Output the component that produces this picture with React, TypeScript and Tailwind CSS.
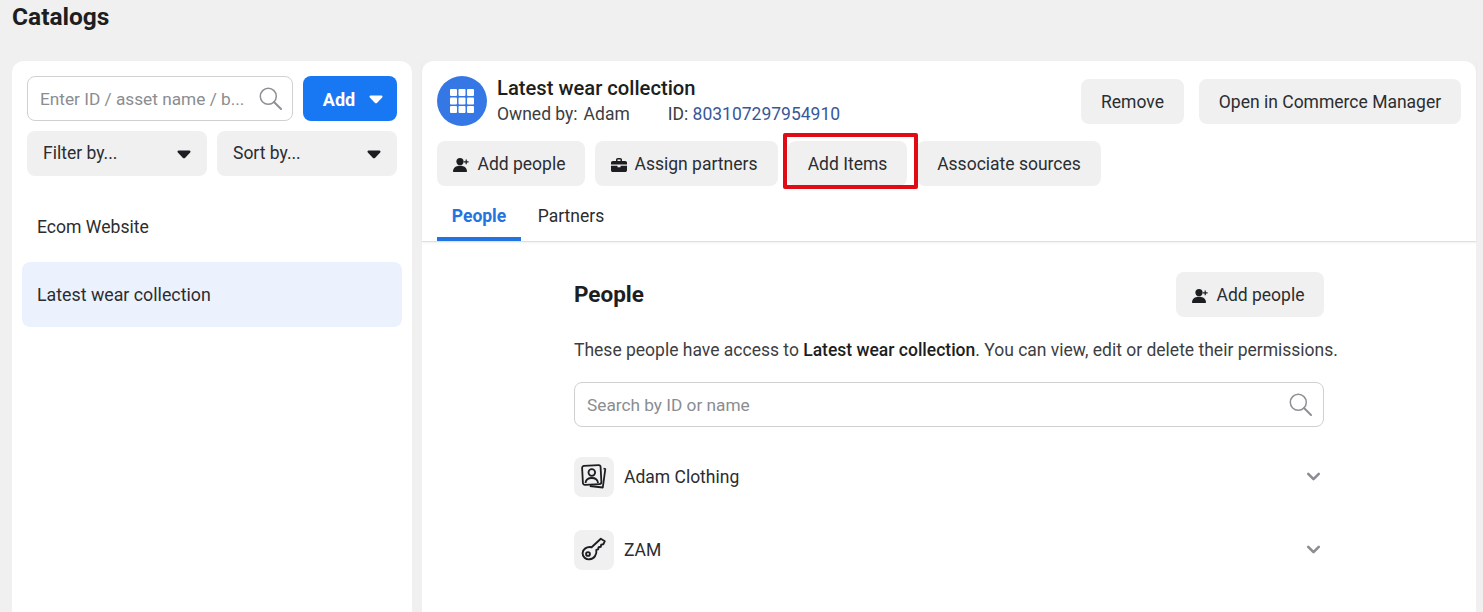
import { ChevronDown } from "lucide-react";

function Caret({ color = "#1c1e21" }: { color?: string }) {
  return (
    <svg width="14" height="9" viewBox="0 0 14 9" fill={color}>
      <path d="M1.6 0.6h10.8c1 0 1.5 1.1 .8 1.9L8 7.9c-.6.6-1.5.6-2 0L.8 2.500C.1 1.700.6.6 1.600.6z" />
    </svg>
  );
}

function SearchGlass() {
  return (
    <svg width="23" height="23" viewBox="0 0 23 23" fill="none" stroke="#8d9094" strokeWidth="1.500" strokeLinecap="round">
      <circle cx="9.300" cy="9.300" r="8" />
      <path d="M15 15l7 7" strokeWidth="2" />
    </svg>
  );
}

function PersonPlus() {
  return (
    <svg width="16" height="16" viewBox="0 0 16 16" fill="#1c1e21">
      <circle cx="7" cy="4.600" r="3.600" />
      <path d="M.6 15c-.4 0-.6-.3-.6-.7C.2 11 2.600 8.800 7 8.800s6.800 2.200 7 5.500c0 .4-.2.7-.6.7H.6z" />
      <path d="M12.600 2.400h1.200v1.800h1.800v1.200h-1.800v1.800h-1.200V5.400h-1.800V4.200h1.800z" />
    </svg>
  );
}

function Briefcase() {
  return (
    <svg width="16" height="14" viewBox="0 0 16 14" fill="#1c1e21">
      <path d="M5 3V1.800C5 .8 5.800 0 6.800 0h2.400C10.200 0 11 .8 11 1.800V3h3.200c1 0 1.800.8 1.800 1.800V6.600H0V4.800C0 3.800.8 3 1.800 3H5zm1.500 0h3V1.500h-3V3z" />
      <path d="M0 7.800h6.500v1.400h3V7.800H16v4.400c0 1-.8 1.800-1.800 1.800H1.800C.8 14 0 13.200 0 12.200V7.800z" />
    </svg>
  );
}

function GridIcon() {
  return (
    <svg width="24" height="24" viewBox="0 0 24 24" fill="#fff">
      {[0, 8.500, 17].map((y) =>
        [0, 8.500, 17].map((x) => <rect key={`${x}-${y}`} x={x} y={y} width="7" height="7" rx="1" />),
      )}
    </svg>
  );
}

function PhotoPerson() {
  return (
    <svg width="26" height="26" viewBox="0 0 26 26" fill="none" stroke="#1c1e21" strokeWidth="1.800" strokeLinejoin="round">
      <rect x="1.500" y="1.500" width="18.500" height="19" rx="2" transform="rotate(-3 10 11)" />
      <circle cx="10.800" cy="8.500" r="3.300" />
      <path d="M4.500 19c.4-3.600 3-5 6.300-5s5.800 1.400 6.200 5" />
      <path d="M22.500 4.500l1.800.5-2.500 18.500-13-1.500" />
    </svg>
  );
}

function KeyIcon() {
  return (
    <svg width="26" height="26" viewBox="0 0 26 26" fill="none" stroke="#1c1e21" strokeWidth="1.900" strokeLinejoin="round" strokeLinecap="round">
      <path d="M10.600 10.200L19.800 1.800l4 2.400-1.400 3-2.200.4-.4 2.200-2.200.5-.5 2-1.800.6c.8 4.400-2 9-6.800 9.400C4.800 22.600 1.400 19.800 1.600 16c.2-3.600 4-6.800 9-5.800z" />
      <circle cx="7" cy="17" r="1.900" />
    </svg>
  );
}

function GrayButton({
  children,
  className = "",
  spread = false,
}: {
  children: React.ReactNode;
  className?: string;
  spread?: boolean;
}) {
  return (
    <div
      className={`flex h-[45px] items-center rounded-lg bg-[#f0f0f0] text-[#2b2d30] ${
        spread ? "justify-between" : "justify-center pt-[2px]"
      } ${className}`}
    >
      {children}
    </div>
  );
}

function PersonRow({ icon, name }: { icon: React.ReactNode; name: string }) {
  return (
    <div className="flex h-10 items-center">
      <div className="flex h-10 w-10 items-center justify-center rounded-lg bg-[#f0f0f0]">{icon}</div>
      <span className="ml-[10px] flex-1 pt-[2px] text-[#2b2d30]">{name}</span>
      <ChevronDown size={21} strokeWidth={3} className="-mt-px text-[#8a8d91]" />
    </div>
  );
}

export default function App() {
  return (
    <div className="h-[612px] w-[1483px] overflow-hidden bg-[#f0f0f0] font-['Roboto',sans-serif] text-[17.500px] leading-none">
      <h1 className="h-[61px] pl-3 pt-[5px] text-[24.500px] leading-6 font-bold text-[#1c1e21]">Catalogs</h1>
      <div className="flex gap-[10px] pl-3 pr-[7px]">
        <aside className="h-[560px] w-[400px] rounded-t-xl bg-white px-[10px] pt-[15px]">
          <div className="flex gap-[10px] px-[5px]">
            <div className="flex h-[45px] w-[266px] items-center justify-between rounded-lg border border-[#cfd0d2] pl-3 pr-[10px] text-[17.250px] text-[#8a8d91]">
              <span className="pt-[2px]">Enter ID / asset name / b...</span>
              <SearchGlass />
            </div>
            <div className="flex h-[45px] w-[94px] items-center justify-center gap-[14px] rounded-lg bg-[#1877f2] pl-[6px] pt-[2px] text-[18px] font-bold text-white">
              Add <Caret color="#fff" />
            </div>
          </div>
          <div className="mt-[10px] flex gap-[10px] px-[5px]">
            <GrayButton spread className="w-[180px] pl-4 pr-[16px]">
              Filter by... <span className="pt-[2px]"><Caret /></span>
            </GrayButton>
            <GrayButton spread className="w-[180px] pl-4 pr-[16px]">
              Sort by... <span className="pt-[2px]"><Caret /></span>
            </GrayButton>
          </div>
          <div className="mt-[17px] flex h-[69px] items-center px-[15px] text-[17.600px] text-[#2b2d30]">Ecom Website</div>
          <div className="flex h-[65px] items-center rounded-lg bg-[#ecf2fd] px-[15px] pt-px text-[17.800px] text-[#2b2d30]">
            Latest wear collection
          </div>
        </aside>

        <main className="h-[560px] flex-1 rounded-t-xl bg-white">
          <div className="h-[181px] border-b border-[#dedfe1] px-[15px] pt-[15px] shadow-[0_1px_2px_rgba(0,0,0,0.06)]">
            <div className="flex h-[50px] justify-between">
              <div className="flex gap-[10px]">
                <div className="flex h-[50px] w-[50px] items-center justify-center rounded-full bg-[#3578e5]">
                  <GridIcon />
                </div>
                <div>
                  <div className="text-[20.200px] leading-6 font-medium text-[#1c1e21]">Latest wear collection</div>
                  <div className="mt-[2px] flex leading-6 text-[#3c3e42]">
                    <span>Owned by:</span>
                    <span className="ml-[6px]">Adam</span>
                    <span className="ml-[38px]">
                      ID: <span className="text-[#385898]">803107297954910</span>
                    </span>
                  </div>
                </div>
              </div>
              <div className="mt-[3px] flex gap-[15px]">
                <GrayButton className="w-[103px]">Remove</GrayButton>
                <GrayButton className="w-[262px]">Open in Commerce Manager</GrayButton>
              </div>
            </div>
            <div className="mt-[15px] flex gap-[10px]">
              <GrayButton className="w-[148px] gap-[9px] pr-[4px]">
                <PersonPlus /> Add people
              </GrayButton>
              <GrayButton className="w-[183px] gap-[8px] pr-[5px]">
                <Briefcase /> Assign partners
              </GrayButton>
              <div className="relative">
                <GrayButton className="w-[119px]">Add Items</GrayButton>
                <div className="absolute -left-[5px] -top-[8px] h-[56px] w-[135px] rounded-[2px] border-4 border-[#e00b14]" />
              </div>
              <GrayButton className="w-[184px]">Associate sources</GrayButton>
            </div>
            <div className="mt-[11px] flex">
              <div className="flex h-[44px] w-[84px] items-start justify-center border-b-4 border-[#2374e1] pt-[11px] font-bold text-[#2374e1]">
                People
              </div>
              <div className="w-[100px] pt-[11px] text-center text-[#2b2d30]">Partners</div>
            </div>
          </div>
          <div className="ml-[152px] w-[750px] pt-[30px]">
            <div className="flex items-center justify-between">
              <h2 className="text-[22.500px] font-bold text-[#1c1e21]">People</h2>
              <GrayButton className="w-[148px] gap-[9px] pr-[4px]">
                <PersonPlus /> Add people
              </GrayButton>
            </div>
            <p className="mt-[24px] h-[18px] leading-[18px] whitespace-nowrap text-[#3c3e42]">
              These people have access to <span className="font-medium text-[#1c1e21]">Latest wear collection</span>. You can view, edit or delete their permissions.
            </p>
            <div className="mt-[23px] flex h-[45px] items-center justify-between rounded-lg border border-[#cfd0d2] pl-3 pr-[11px] text-[17.250px] text-[#8a8d91]">
              <span className="pt-[2px]">Search by ID or name</span>
              <SearchGlass />
            </div>
            <div className="mt-[30px] flex flex-col gap-[33px]">
              <PersonRow icon={<PhotoPerson />} name="Adam Clothing" />
              <PersonRow icon={<KeyIcon />} name="ZAM" />
            </div>
          </div>
        </main>
      </div>
    </div>
  );
}
